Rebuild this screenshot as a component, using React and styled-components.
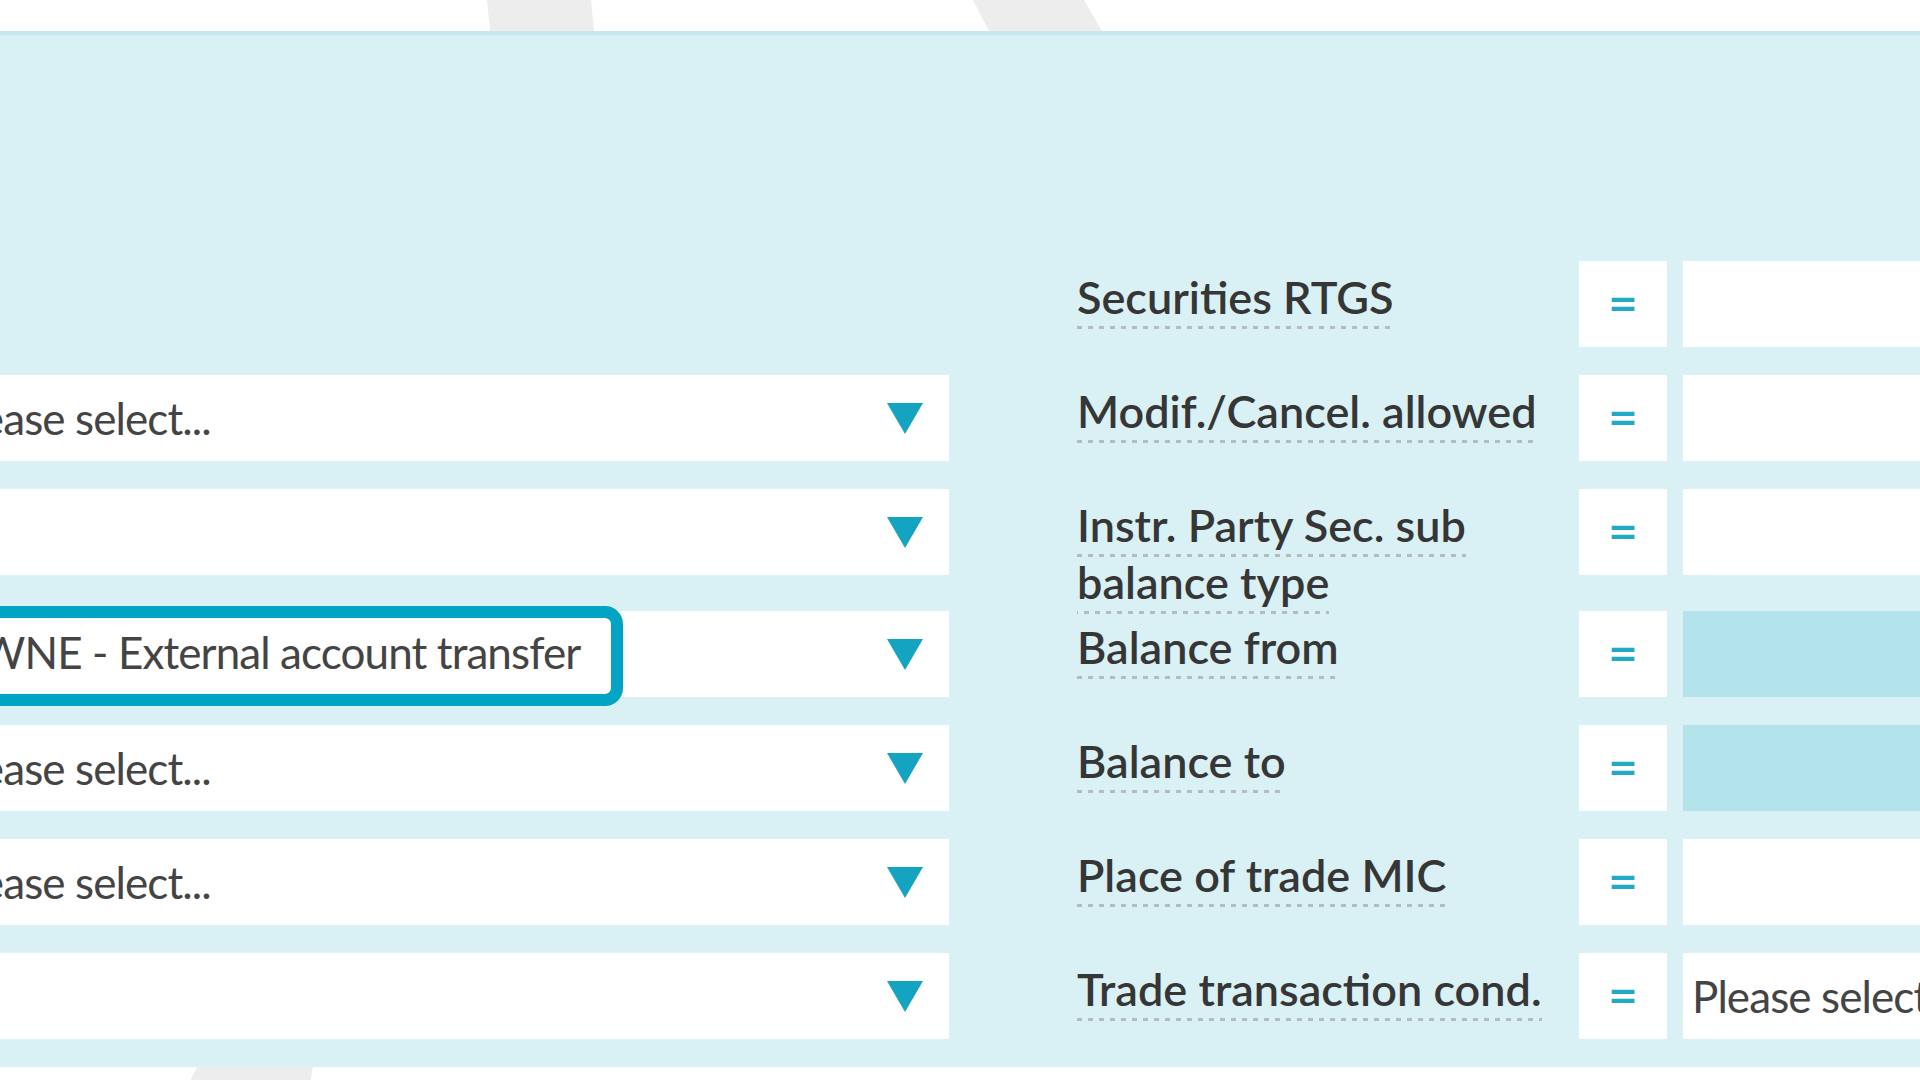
import React from "react";
import styled, { createGlobalStyle, css } from "styled-components";

const OFF = 65;
const SEL = 949 + OFF;

const Global = createGlobalStyle`
  html, body { margin: 0; padding: 0; background: #ffffff; overflow: hidden; }
  body { font-family: "Lato", "Noto Sans", sans-serif; }
`;

const Page = styled.div`
  width: 1920px;
  height: 1080px;
  overflow: hidden;
  background: #ffffff;
  display: flex;
  flex-direction: column;
`;

const Strip = styled.div`
  height: ${(p) => p.$h}px;
  flex: none;
  line-height: 0;
  svg { display: block; }
`;

const Panel = styled.section`
  flex: none;
  margin-left: -${OFF}px;
  width: 2400px;
  background: #d9f1f5;
  border-top: 4px solid #c5e8ee;
  padding-top: 226px;
  display: flex;
  flex-direction: column;
`;

const Row = styled.div`
  display: grid;
  grid-template-columns: ${SEL}px 630px 88px 460px;
  align-items: start;
`;

const Box = css`
  height: 86px;
  margin-bottom: 28px;
  box-sizing: border-box;
  display: flex;
  align-items: center;
`;

const SelectBox = styled.div`
  ${Box};
  background: #ffffff;
  padding: 0 26px 0 11px;
`;

const Empty = styled.div`
  height: 114px;
`;

const Value = styled.span`
  font-size: 44px;
  letter-spacing: -0.9px;
  line-height: 57px;
  font-weight: 400;
  color: #444444;
  white-space: nowrap;
  ${(p) =>
    p.$focused &&
    css`
      display: inline-block;
      padding: 6px 31px 13px 0;
      margin-top: 4px;
      border-radius: 6px;
      outline: 12px solid #03a4c3;
      outline-offset: 0;
    `}
`;

const Arrow = styled.svg`
  margin-left: auto;
  flex: none;
`;

const LabelCell = styled.div`
  padding-left: 128px;
  padding-top: 8px;
  font-size: 45px;
  line-height: 57px;
  font-weight: 600;
  color: #363636;
`;

const LabelText = styled.span`
  padding-bottom: 5px;
  background-image: linear-gradient(to right, #b3bcbe 50%, transparent 50%);
  background-size: 11px 3px;
  background-repeat: repeat-x;
  background-position: left bottom;
`;

const EqBox = styled.div`
  ${Box};
  justify-content: center;
  background: #ffffff;
  color: #22a9c4;
  font-size: 52px;
  font-weight: 600;
  padding-bottom: 4px;
`;

const Input = styled.div`
  ${Box};
  margin-left: 16px;
  background: ${(p) => (p.$disabled ? "#b3e3ea" : "#ffffff")};
  padding-left: 9px;
`;

const rows = [
  { sel: null, label: "Securities RTGS" },
  { sel: "Please select...", label: "Modif./Cancel. allowed" },
  { sel: "", label: "Instr. Party Sec. sub balance type" },
  { sel: "OWNE - External account transfer", focused: true, label: "Balance from", disabled: true },
  { sel: "Please select...", label: "Balance to", disabled: true },
  { sel: "Please select...", label: "Place of trade MIC" },
  { sel: "", label: "Trade transaction cond.", value: "Please select..." },
];

function Triangle() {
  return (
    <Arrow width="36" height="31" viewBox="0 0 36 31">
      <polygon points="0,0 36,0 18,31" fill="#14a3c0" />
    </Arrow>
  );
}

export default function App() {
  return (
    <>
      <Global />
      <Page>
        <Strip $h={31}>
          <svg width="1920" height="31" viewBox="0 0 1920 31">
            <polygon points="487,0 591,0 594,31 490,31" fill="#ededed" />
            <polygon points="973,0 1084,0 1102,31 989,31" fill="#ededed" />
          </svg>
        </Strip>
        <Panel>
          {rows.map((r, i) => (
            <Row key={i}>
              {r.sel === null ? (
                <Empty />
              ) : (
                <SelectBox>
                  {r.sel && <Value $focused={r.focused}>{r.sel}</Value>}
                  <Triangle />
                </SelectBox>
              )}
              <LabelCell>
                <LabelText>{r.label}</LabelText>
              </LabelCell>
              <EqBox>=</EqBox>
              <Input $disabled={r.disabled}>{r.value && <Value>{r.value}</Value>}</Input>
            </Row>
          ))}
        </Panel>
        <Strip $h={16}>
          <svg width="1920" height="16" viewBox="0 0 1920 16">
            <polygon points="197,0 313,0 310,16 189,16" fill="#ededed" />
          </svg>
        </Strip>
      </Page>
    </>
  );
}
